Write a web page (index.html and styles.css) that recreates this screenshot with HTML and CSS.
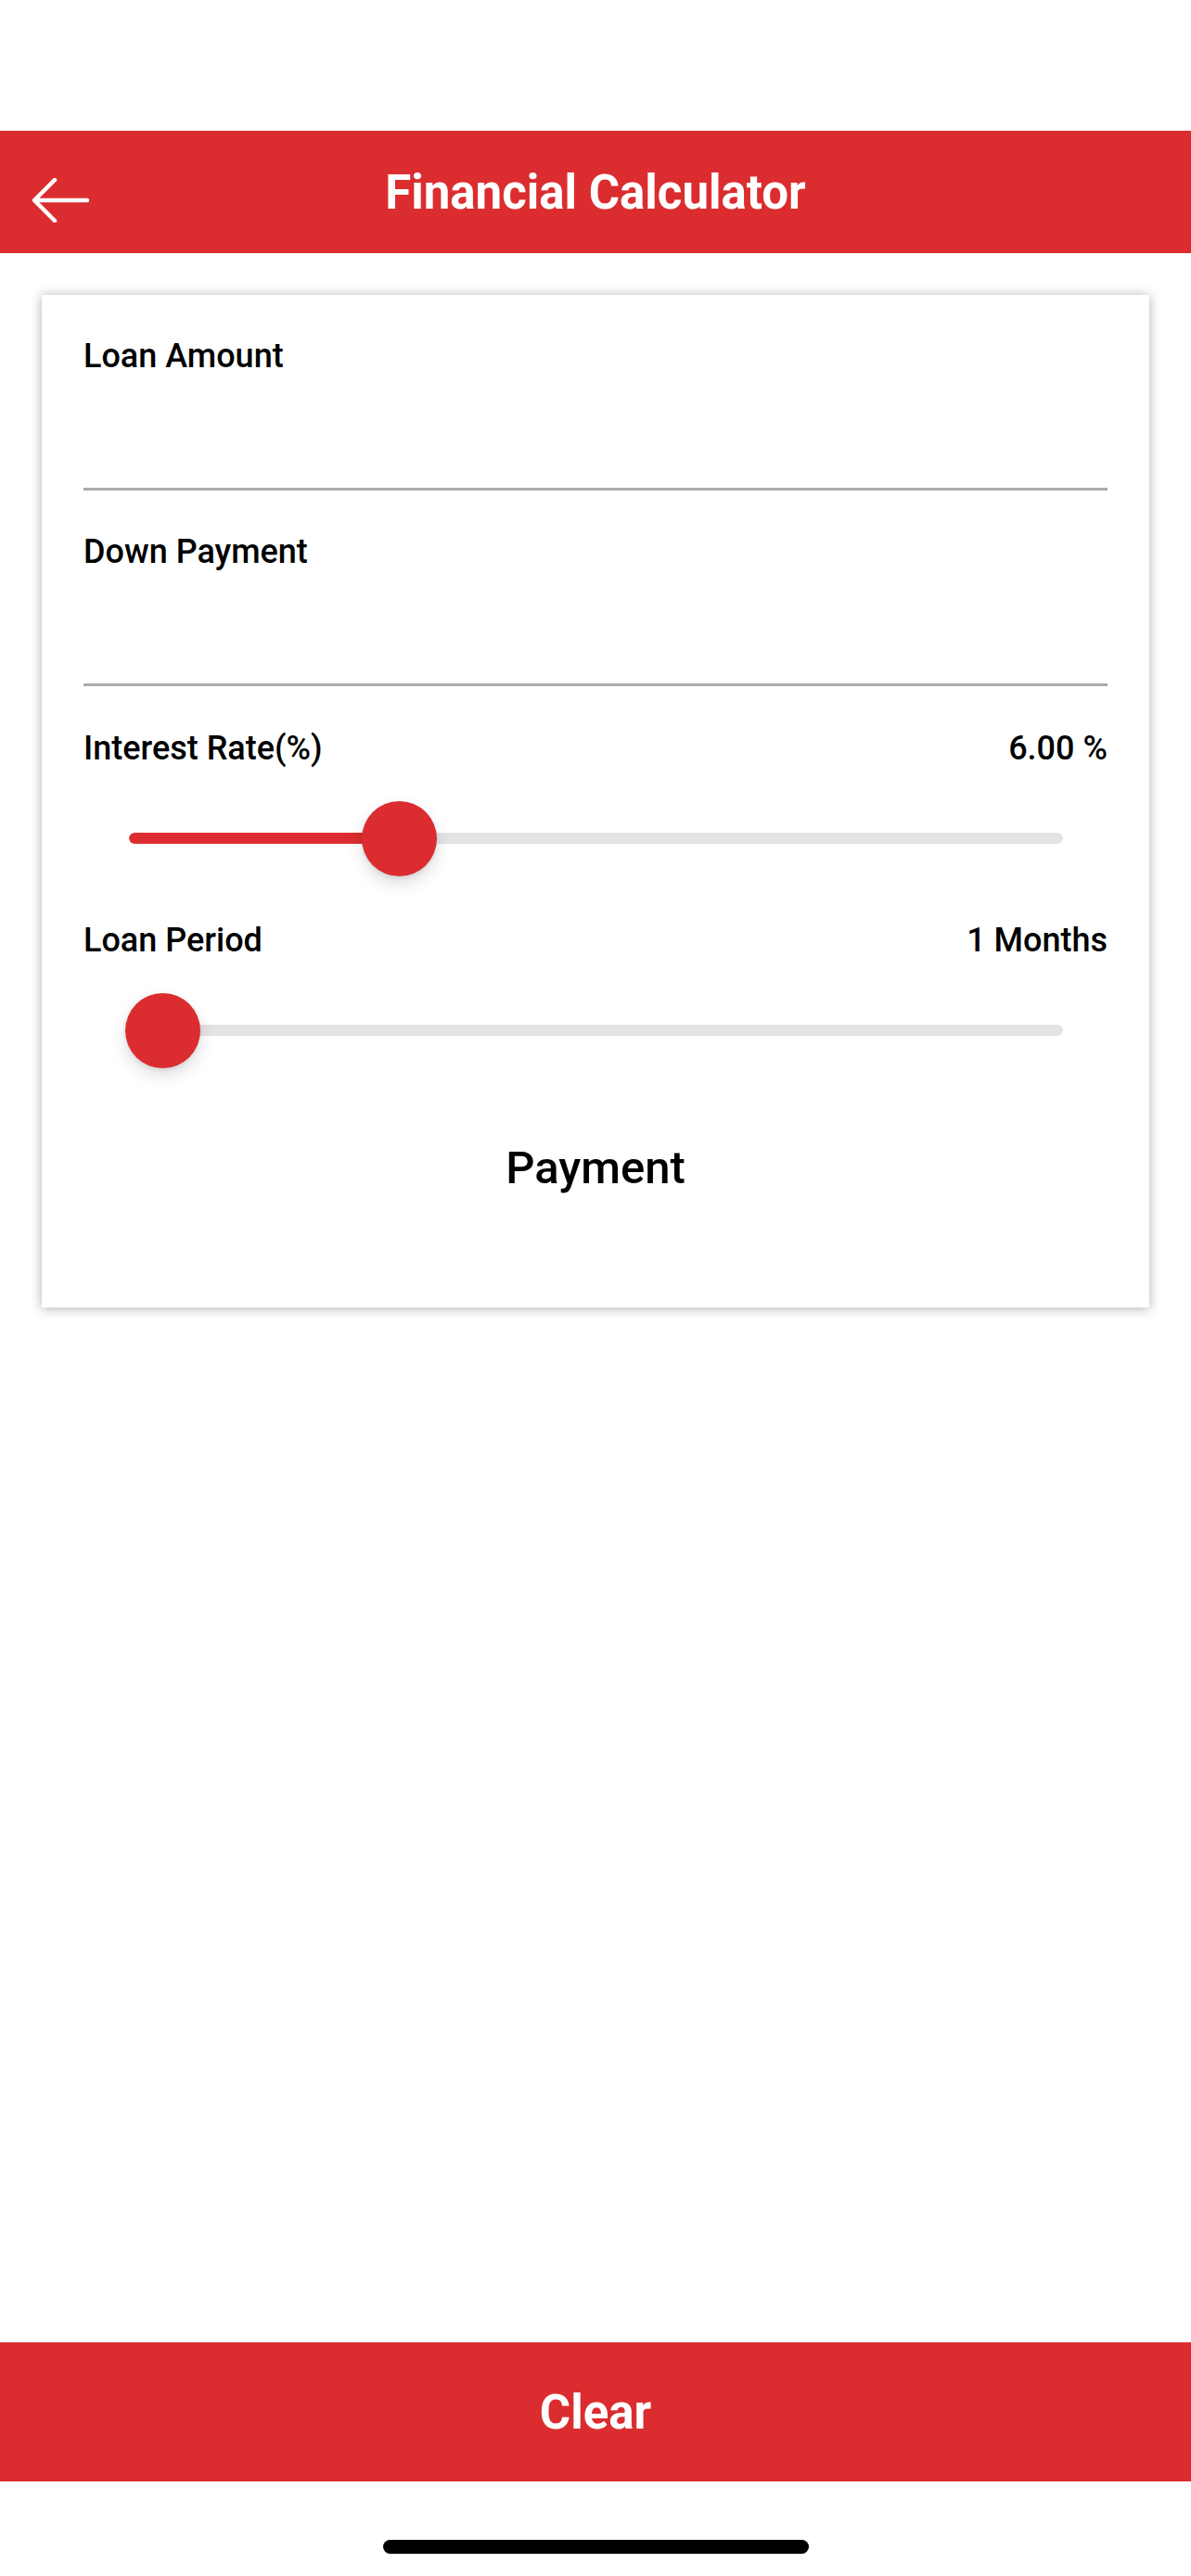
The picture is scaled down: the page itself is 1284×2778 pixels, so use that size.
FILE: index.html
```html
<!DOCTYPE html>
<html lang="en">
<head>
<meta charset="utf-8">
<title>Financial Calculator</title>
<link rel="stylesheet" href="styles.css">
</head>
<body>
<div class="screen">
  <div class="status"></div>
  <header class="appbar">
    <div class="back">
      <svg class="back-icon" viewBox="0 0 62 48" width="62" height="48" aria-hidden="true">
        <path d="M2 24 H59 M24 2 L2 24 L24 46" fill="none" stroke="#fff" stroke-width="4.5" stroke-linecap="round" stroke-linejoin="round"/>
      </svg>
    </div>
    <h1 class="title">Financial Calculator</h1>
    <div></div>
  </header>

  <main class="content">
    <section class="card">
      <div class="field">
        <div class="label">Loan Amount</div>
        <div class="input"></div>
      </div>
      <div class="field">
        <div class="label">Down Payment</div>
        <div class="input"></div>
      </div>

      <div class="row row-first">
        <span class="label">Interest Rate(%)</span>
        <span class="label">6.00 %</span>
      </div>
      <div class="slider" style="--v:0.273">
        <div class="track"><div class="fill"></div></div>
        <div class="thumb"></div>
      </div>

      <div class="row">
        <span class="label">Loan Period</span>
        <span class="label">1 Months</span>
      </div>
      <div class="slider slider-second" style="--v:0">
        <div class="track"><div class="fill"></div></div>
        <div class="thumb"></div>
      </div>

      <div class="payment">Payment</div>
    </section>
  </main>

  <button class="clear" type="button">Clear</button>
  <div class="home-area"><div class="home-indicator"></div></div>
</div>
</body>
</html>
```

FILE: styles.css
```css
* {
  box-sizing: border-box;
}

html, body {
  margin: 0;
  padding: 0;
  background: #ffffff;
}

body {
  font-family: Roboto, "Noto Sans", "Liberation Sans", sans-serif;
  color: #000000;
}

.screen {
  display: flex;
  flex-direction: column;
  height: 2778px;
  width: 1284px;
}

.status {
  height: 141px;
  flex: none;
}

.appbar {
  flex: none;
  height: 132px;
  background: #db2d2f;
  display: grid;
  grid-template-columns: 1fr auto 1fr;
  align-items: center;
}

.back {
  padding-left: 35px;
  display: flex;
  align-items: center;
}

.back-icon {
  display: block;
  margin-top: 18px;
}

.title {
  margin: 0;
  color: #ffffff;
  font-size: 51px;
  font-weight: 700;
  line-height: 1;
  letter-spacing: 0;
}

.content {
  flex: 1;
}

.card {
  margin: 45px 45px 0;
  height: 1092px;
  background: #ffffff;
  box-shadow: 0 1px 12px rgba(0, 0, 0, 0.32);
  padding: 0 45px;
  display: flex;
  flex-direction: column;
}

.label {
  font-size: 36px;
  font-weight: 500;
  line-height: 35px;
  white-space: nowrap;
}

.field {
  margin-top: 48.5px;
}

.input {
  height: 127.5px;
  border-bottom: 3px solid #ababab;
}

.row {
  display: flex;
  justify-content: space-between;
  margin-top: 52px;
}

.row-first {
  margin-top: 50px;
}

.slider {
  position: relative;
  margin: 38.5px 44px 0 45px;
  height: 81px;
  padding: 0 4px;
  display: flex;
  align-items: center;
}

.slider-second {
  margin-top: 39px;
}

.track {
  width: 100%;
  height: 12px;
  border-radius: 6px;
  background: #e3e3e5;
  overflow: hidden;
}

.fill {
  height: 100%;
  width: calc(var(--v) * (100% - 73px) + 36.5px);
  background: #db2d2f;
  border-radius: 6px 0 0 6px;
}

.thumb {
  position: absolute;
  top: 0;
  left: calc(var(--v) * (100% - 81px));
  width: 81px;
  height: 81px;
  border-radius: 50%;
  background: #db2d2f;
  box-shadow: 0 8px 18px rgba(0, 0, 0, 0.13), 0 2px 4px rgba(0, 0, 0, 0.08);
}

.payment {
  margin-top: 84.5px;
  text-align: center;
  font-size: 49px;
  font-weight: 500;
  line-height: 48px;
}

.clear {
  flex: none;
  display: block;
  width: 100%;
  height: 150px;
  border: 0;
  margin: 0;
  padding: 0;
  background: #db2d2f;
  color: #ffffff;
  font-family: Roboto, "Noto Sans", "Liberation Sans", sans-serif;
  font-size: 51px;
  font-weight: 700;
  line-height: 1;
}

.home-area {
  flex: none;
  height: 102px;
  display: flex;
  justify-content: center;
  padding-top: 63px;
}

.home-indicator {
  width: 459px;
  height: 15px;
  border-radius: 8px;
  background: #000000;
}
```
